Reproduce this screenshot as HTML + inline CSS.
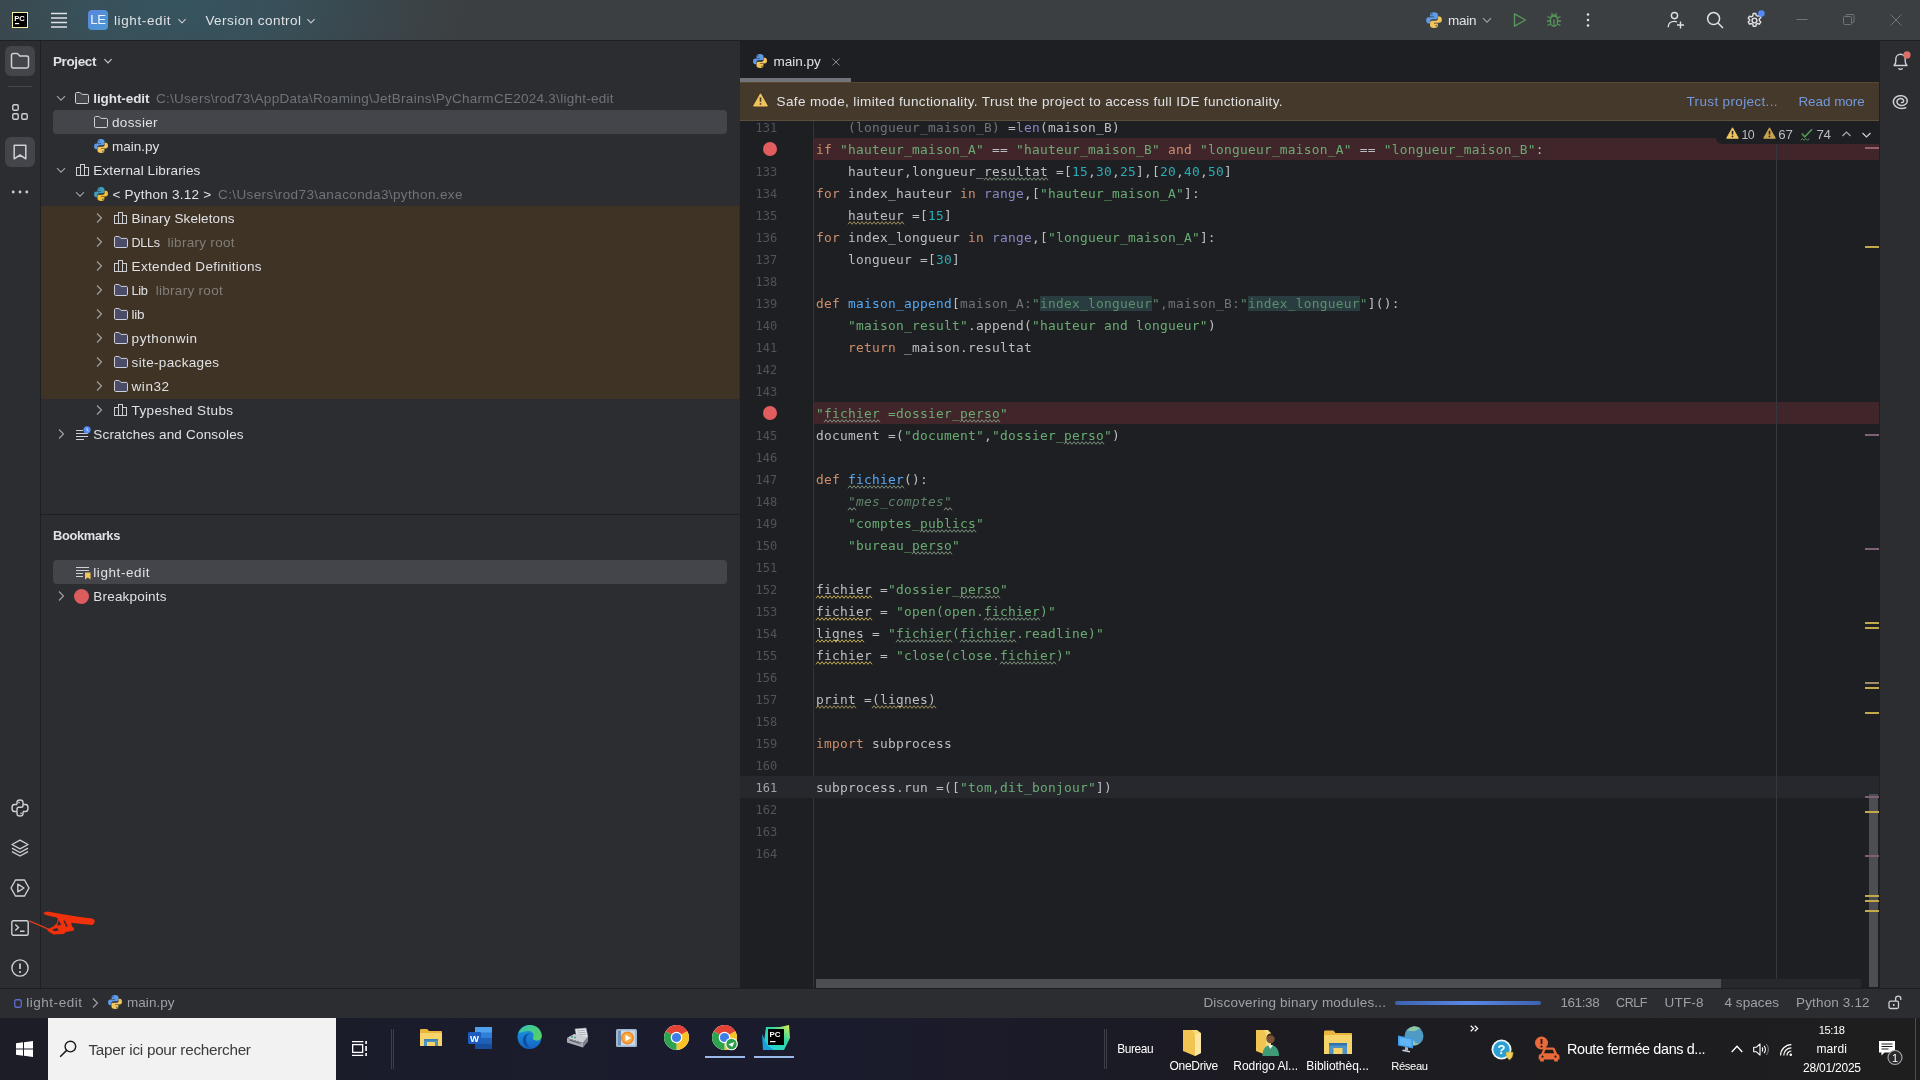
<!DOCTYPE html>
<html lang="fr">
<head>
<meta charset="utf-8">
<title>light-edit – main.py</title>
<style>
*{box-sizing:border-box;margin:0;padding:0}
html,body{width:1920px;height:1080px;overflow:hidden;background:#2b2d30}
body{position:relative;font-family:"Liberation Sans","DejaVu Sans",sans-serif;font-size:13px;color:#dfe1e5;-webkit-font-smoothing:antialiased}
.abs{position:absolute}
#titlebar,#lstripe,#project,#bookmarks,#editor,#rstripe,#status,#taskbar{will-change:transform}
svg{display:block;overflow:visible}
/* ---------- title bar ---------- */
#titlebar{z-index:5;left:0;top:0;width:1920px;height:41px;border-bottom:1px solid #1e1f22;background:radial-gradient(ellipse 290px 150px at 178px 4px,#36545f 0%,#385059 35%,#3a474d 65%,#3c3f41 100%),#3c3f41}
#titlebar .t{position:absolute;top:1px;height:40px;line-height:40px;font-size:13.4px;color:#dfe1e5;white-space:nowrap}
/* ---------- stripes ---------- */
#lstripe{left:0;top:40px;width:41px;height:948px;background:#2b2d30;border-right:1px solid #1e1f22}
#rstripe{left:1879px;top:40px;width:41px;height:948px;background:#2b2d30;border-left:1px solid #1e1f22}
.sbtn{position:absolute;left:5px;width:30px;height:30px;border-radius:6px;background:#43454a}
.ico{position:absolute}
/* ---------- project ---------- */
#project{left:41px;top:40px;width:699px;height:474px;background:#2b2d30;overflow:hidden}
#bookmarks{left:41px;top:515px;width:699px;height:473px;background:#2b2d30;overflow:hidden}
#psplit{left:41px;top:514px;width:699px;height:1px;background:#1e1f22}
.phead{position:absolute;left:12px;font-weight:bold;font-size:13px;color:#dfe1e5;letter-spacing:-.1px;white-space:nowrap}
.row{position:absolute;left:0;width:699px;height:24px;line-height:24px;white-space:nowrap;color:#dfe1e5;font-size:13.2px}
.row .lbl{position:absolute;top:1px}
.row .dim{color:#6f737a}
.sel{position:absolute;left:12px;width:674px;height:24px;border-radius:4px;background:#43454a}
.lib{background:#3f3326}
/* ---------- editor ---------- */
#editor{left:740px;top:40px;width:1139px;height:948px;background:#1e1f22;overflow:hidden}
#code{position:absolute;left:0;top:76px;width:1139px;font-family:"DejaVu Sans Mono","Liberation Mono",monospace;font-size:12.85px;letter-spacing:0.264px;color:#bcbec4}
.ln{position:relative;height:22px;line-height:22px;white-space:pre}
.ln .n{position:absolute;left:0;width:37.3px;text-align:right;color:#4e535c;top:1px;font-size:12px;letter-spacing:0}
.ln .c{position:absolute;left:76px;top:1px}
.bp{background:linear-gradient(90deg,transparent 74px,#40252b 74px)}
.cur{background:#26282e}
.cur .n{color:#a1a3ab}
.k{color:#cf8e6d}.s{color:#6aab73}.m{color:#2aacb8}.f{color:#56a8f5}.b{color:#8888c6}.g{color:#6f737a}.d{color:#5f826b;font-style:italic}
.hl{background:#293c40}
.s2{color:#5c8f6c}
.bpdot{position:absolute;left:22.6px;top:3.7px;width:14.4px;height:14.4px;border-radius:50%;background:#e25d5d}
.zz{position:absolute;top:17.3px}
/* ---------- status ---------- */
#status{left:0;top:988px;width:1920px;height:30px;background:#2b2d30;border-top:1px solid #1e1f22;color:#9da0a8;font-size:13px}
#status .t{position:absolute;top:0;height:29px;line-height:28px;white-space:nowrap}
/* ---------- taskbar ---------- */
#taskbar{left:0;top:1018px;width:1920px;height:62px;background:linear-gradient(90deg,#1c1d26 0,#1b1c2b 420px,#1a1b2d 800px,#1b1b27 1080px,#1c1b22 1250px,#1d1d20 1600px,#1e1e1f 1920px);color:#fff;font-size:12px}
#taskbar .t{position:absolute;white-space:nowrap;color:#fff}
</style>
</head>
<body>
<svg width="0" height="0" style="position:absolute"><defs>
<symbol id="py" viewBox="0 0 16 16"><path d="M7.9 1C5.2 1 4.6 2.1 4.6 3.2V4.9h3.5v.7H3.2C2 5.6 1 6.6 1 8.3s.9 2.9 2.1 2.9h1.3V9.3c0-1.1.9-2 2.1-2h3.3c1 0 1.7-.7 1.7-1.7V3.2C11.5 2.1 10.5 1 7.9 1zM6.1 2.2a.65.65 0 110 1.3.65.65 0 010-1.3z" fill="#5d9be8"/><path d="M8.1 15c2.7 0 3.3-1.1 3.3-2.2V11.1H7.9v-.7h4.9c1.2 0 2.2-1 2.2-2.7s-.9-2.9-2.1-2.9h-1.3v1.9c0 1.1-.9 2-2.1 2H6.2c-1 0-1.7.7-1.7 1.7v2.4C4.5 13.9 5.5 15 8.1 15zm1.8-1.2a.65.65 0 110-1.3.65.65 0 010 1.3z" fill="#f2c55c"/></symbol>
<symbol id="folder" viewBox="0 0 16 16"><path d="M1.5 3.6c0-.6.5-1.1 1.1-1.1h3.2c.3 0 .6.1.8.4l1.1 1.3c.1.1.3.2.5.2h5.2c.6 0 1.1.5 1.1 1.1v6.9c0 .6-.5 1.1-1.1 1.1H2.6c-.6 0-1.1-.5-1.1-1.1z" fill="#43454a" stroke="#ced0d6" stroke-width="1"/></symbol>
<symbol id="libicon" viewBox="0 0 16 16"><g fill="none" stroke="#ced0d6" stroke-width="1"><rect x="1.5" y="5.5" width="4" height="8"/><rect x="5.5" y="2.5" width="4" height="11"/><rect x="9.5" y="5.5" width="4" height="8"/></g></symbol>
<symbol id="chevr" viewBox="0 0 16 16"><path d="M6 3.5L10.5 8 6 12.5" fill="none" stroke="#9da0a8" stroke-width="1.2"/></symbol>
<symbol id="chevd" viewBox="0 0 16 16"><path d="M4 6.2L8 10.2 12 6.2" fill="none" stroke="#9da0a8" stroke-width="1.2"/></symbol>
<symbol id="pysdk" viewBox="0 0 16 16"><path d="M7.9 1C5.2 1 4.6 2.1 4.6 3.2V4.9h3.5v.7H3.2C2 5.6 1 6.6 1 8.3s.9 2.9 2.1 2.9h1.3V9.3c0-1.1.9-2 2.1-2h3.3c1 0 1.7-.7 1.7-1.7V3.2C11.5 2.1 10.5 1 7.9 1zM6.1 2.2a.65.65 0 110 1.3.65.65 0 010-1.3z" fill="#3f9ec0"/><path d="M8.1 15c2.7 0 3.3-1.1 3.3-2.2V11.1H7.9v-.7h4.9c1.2 0 2.2-1 2.2-2.7s-.9-2.9-2.1-2.9h-1.3v1.9c0 1.1-.9 2-2.1 2H6.2c-1 0-1.7.7-1.7 1.7v2.4C4.5 13.9 5.5 15 8.1 15zm1.8-1.2a.65.65 0 110-1.3.65.65 0 010 1.3z" fill="#f2c037"/></symbol>
<symbol id="folderlib" viewBox="0 0 16 16"><path d="M1.5 3.6c0-.6.5-1.1 1.1-1.1h3.2c.3 0 .6.1.8.4l1.1 1.3c.1.1.3.2.5.2h5.2c.6 0 1.1.5 1.1 1.1v6.9c0 .6-.5 1.1-1.1 1.1H2.6c-.6 0-1.1-.5-1.1-1.1z" fill="#4b4c68" stroke="#ced0d6" stroke-width="1"/></symbol>
<symbol id="scratch" viewBox="0 0 16 16"><path d="M1 4.5h7M1 7.5h12M1 10.5h12M1 13.5h8" stroke="#ced0d6" stroke-width="1"/><circle cx="12" cy="3.8" r="3.6" fill="#548af7"/><path d="M12 1.8v2.2l1.4.9" fill="none" stroke="#e6edff" stroke-width=".9"/></symbol>
<symbol id="bmlist" viewBox="0 0 16 16"><path d="M1 3.5h13M1 6.5h13M1 9.5h7M1 12.5h7" stroke="#ced0d6" stroke-width="1"/><path d="M10 8.5h5.5v7L12.75 13.6 10 15.5z" fill="#f2c55c"/></symbol>
<symbol id="chevs" viewBox="0 0 16 16"><path d="M4.4 6.2L8 9.8 11.6 6.2" fill="none" stroke="#c3c6cc" stroke-width="1.2"/></symbol>
</defs></svg>
<div id="titlebar" class="abs">
<div class="ico" style="left:12px;top:12px;width:16px;height:16px;background:#000;border:1px solid #f3eea0"><svg width="14" height="14" viewBox="0 0 14 14"><text x="1.2" y="7.6" font-family="Liberation Sans,sans-serif" font-weight="bold" font-size="7.4" fill="#fff" textLength="10.6" lengthAdjust="spacingAndGlyphs">PC</text><rect x="2" y="10" width="4.2" height="1.2" fill="#fff"/></svg></div>
<svg class="ico" style="left:50px;top:12px" width="18" height="16" viewBox="0 0 18 16"><path d="M1 1.5h16M1 6h16M1 10.5h16M1 15h16" stroke="#dfe1e5" stroke-width="1.3"/></svg>
<div class="ico" style="left:88px;top:10px;width:20px;height:20px;border-radius:4px;background:linear-gradient(135deg,#5b86dc,#4a9ad4);color:#eef6ff;font-size:13px;font-weight:normal;line-height:20px;text-align:center;letter-spacing:-.2px">LE</div>
<span class="t" style="left:114px;font-size:13.5px;letter-spacing:0.608px;">light-edit</span>
<svg class="ico" style="left:173.5px;top:12.5px" width="16" height="16"><use href="#chevs"/></svg>
<span class="t" style="left:205.4px;font-size:13.5px;letter-spacing:0.45px;">Version control</span>
<svg class="ico" style="left:303px;top:12.5px" width="16" height="16"><use href="#chevs"/></svg>
<svg class="ico" style="left:1425px;top:11px" width="18" height="18"><use href="#py"/></svg>
<span class="t" style="left:1448px;font-size:13.5px;letter-spacing:-0.287px;">main</span>
<svg class="ico" style="left:1479px;top:12px" width="16" height="16"><use href="#chevd"/></svg>
<svg class="ico" style="left:1512px;top:12px" width="16" height="16" viewBox="0 0 16 16"><path d="M2.5 1.8v12.4L13.5 8z" fill="none" stroke="#57965c" stroke-width="1.4" stroke-linejoin="round"/></svg>
<svg class="ico" style="left:1546px;top:12px" width="16" height="16" viewBox="0 0 16 16"><g fill="none" stroke="#57965c" stroke-width="1.3"><path d="M4.5 7.5a3.5 3.5 0 017 0v3a3.5 3.5 0 01-7 0z"/><path d="M5.2 5.2a2.8 2.3 0 015.6 0"/><path d="M8 7.5v6M1 9h3.5M11.5 9H15M1.5 13.5l3-1.5M14.5 13.5l-3-1.5M1.5 4.5l3 1.5M14.5 4.5l-3 1.5M5.5 1l1 1.5M10.5 1l-1 1.5"/></g></svg>
<svg class="ico" style="left:1580px;top:12px" width="16" height="16" viewBox="0 0 16 16"><g fill="#dfe1e5"><circle cx="8" cy="2.5" r="1.25"/><circle cx="8" cy="8" r="1.25"/><circle cx="8" cy="13.5" r="1.25"/></g></svg>
<svg class="ico" style="left:1667px;top:11px" width="18" height="18" viewBox="0 0 18 18"><g fill="none" stroke="#dfe1e5" stroke-width="1.4"><circle cx="7.5" cy="4.6" r="3.1"/><path d="M1.2 16.2c0-3.6 2.6-5.8 6.3-5.8 1 0 1.8.1 2.5.4"/><path d="M13.5 10.5v7M10 14h7"/></g></svg>
<svg class="ico" style="left:1706px;top:11px" width="18" height="18" viewBox="0 0 18 18"><g fill="none" stroke="#dfe1e5" stroke-width="1.5"><circle cx="7.6" cy="7.6" r="6"/><path d="M12 12l5 5"/></g></svg>
<svg class="ico" style="left:1746px;top:11px" width="18" height="18" viewBox="0 0 18 18"><g fill="none" stroke="#dfe1e5" stroke-width="1.4"><circle cx="8.5" cy="9.5" r="2.4"/><path d="M7.2 2.5h2.6l.5 2 1.3.7 1.9-.7 1.3 2.2-1.5 1.4v1.5l1.5 1.4-1.3 2.2-1.9-.7-1.3.7-.5 2H7.2l-.5-2-1.3-.7-1.9.7-1.3-2.2 1.5-1.4V8.7L2.2 7.3l1.3-2.2 1.9.7 1.3-.7z" stroke-linejoin="round"/></g><circle cx="15.4" cy="2.6" r="3.3" fill="#548af7"/></svg>
<svg class="ico" style="left:1796px;top:12px" width="12" height="16"><path d="M0.5 7.5h11" stroke="#6f737a" stroke-width="1"/></svg>
<svg class="ico" style="left:1843px;top:14px" width="12" height="12" viewBox="0 0 12 12"><g fill="none" stroke="#6f737a" stroke-width="1"><rect x=".5" y="2.5" width="8" height="8" rx="1"/><path d="M3 2.5V1.5a1 1 0 011-1h6a1 1 0 011 1v6a1 1 0 01-1 1H8.5"/></g></svg>
<svg class="ico" style="left:1890px;top:14px" width="12" height="12" viewBox="0 0 12 12"><path d="M.5.5l11 11M11.5.5L.5 11.5" stroke="#6f737a" stroke-width="1"/></svg>
</div>
<div id="lstripe" class="abs">
<div class="sbtn" style="top:6px"></div>
<svg class="ico" style="left:10px;top:11px" width="20" height="20" viewBox="0 0 20 20"><path d="M1.5 4.2c0-1 .8-1.7 1.7-1.7h3.7c.5 0 1 .2 1.3.6l1.5 1.9h7c1 0 1.8.8 1.8 1.7v8.6c0 1-.8 1.7-1.7 1.7H3.2c-1 0-1.7-.8-1.7-1.7z" fill="none" stroke="#ced0d6" stroke-width="1.5"/></svg>
<div class="ico" style="left:8px;top:46px;width:24px;height:1px;background:#43454a"></div>
<svg class="ico" style="left:12px;top:64px" width="16" height="16" viewBox="0 0 16 16"><g fill="none" stroke="#ced0d6" stroke-width="1.4"><rect x=".8" y=".8" width="5.4" height="5.4" rx="1.2"/><rect x=".8" y="9.8" width="5.4" height="5.4" rx="1.2"/><rect x="9.8" y="9.8" width="5.4" height="5.4" rx="1.2"/></g></svg>
<div class="sbtn" style="top:97px"></div>
<svg class="ico" style="left:13px;top:104px" width="14" height="16" viewBox="0 0 14 16"><path d="M1.2 1.2h11.6v13.6L7 11 1.2 14.8z" fill="none" stroke="#ced0d6" stroke-width="1.5" stroke-linejoin="round"/></svg>
<svg class="ico" style="left:11px;top:149px" width="18" height="6" viewBox="0 0 18 6"><g fill="#ced0d6"><circle cx="2.2" cy="3" r="1.4"/><circle cx="9" cy="3" r="1.4"/><circle cx="15.8" cy="3" r="1.4"/></g></svg>
<svg class="ico" style="left:11px;top:759px" width="18" height="18" viewBox="0 0 18 18"><g fill="none" stroke="#ced0d6" stroke-width="1.4" stroke-linejoin="round"><path d="M6 5.5V3.2C6 1.9 7 1 9 1s3 .9 3 2.2v3.3c0 1-.8 1.8-1.8 1.8H7.8C6.8 8.3 6 9.1 6 10.1v1.6"/><path d="M6 5.5H3.2C1.9 5.5 1 6.5 1 9s.9 3.5 2.2 3.5H6"/><path d="M12 12.5v2.3c0 1.3-1 2.2-3 2.2s-3-.9-3-2.2v-3.1"/><path d="M12 12.5h2.8c1.3 0 2.2-1 2.2-3.5s-.9-3.5-2.2-3.5H12"/></g><circle cx="8" cy="3.6" r=".8" fill="#ced0d6"/><circle cx="10" cy="14.4" r=".8" fill="#ced0d6"/></svg>
<svg class="ico" style="left:11px;top:799px" width="18" height="18" viewBox="0 0 18 18"><g fill="none" stroke="#ced0d6" stroke-width="1.4" stroke-linejoin="round"><path d="M9 1.2l8 4.3-8 4.3-8-4.3z"/><path d="M1 9.2l8 4.3 8-4.3"/><path d="M1 12.7l8 4.3 8-4.3"/></g></svg>
<svg class="ico" style="left:10px;top:839px" width="20" height="18" viewBox="0 0 20 18"><g fill="none" stroke="#ced0d6" stroke-width="1.4" stroke-linejoin="round"><path d="M5.5 1h9L19 9l-4.5 8h-9L1 9z"/><path d="M7.8 5.2v7.6L14 9z"/></g></svg>
<svg class="ico" style="left:11px;top:880px" width="18" height="16" viewBox="0 0 18 16"><g fill="none" stroke="#ced0d6" stroke-width="1.4"><rect x=".8" y=".8" width="16.4" height="14.4" rx="1.5"/><path d="M4.3 4.5l3.2 3-3.2 3M9 11.2h4.5"/></g></svg>
<svg class="ico" style="left:11px;top:919px" width="18" height="18" viewBox="0 0 18 18"><circle cx="9" cy="9" r="8.1" fill="none" stroke="#ced0d6" stroke-width="1.4"/><path d="M9 4.5v5.5" stroke="#ced0d6" stroke-width="1.7"/><circle cx="9" cy="13" r="1.1" fill="#ced0d6"/></svg>
</div>
<div id="project" class="abs"><div class="phead" style="top:13px;line-height:18px"><span class="" style="left:0px;font-size:13.5px;letter-spacing:-0.395px;font-weight:bold;position:static;">Project</span></div><svg class="ico" style="left:58.5px;top:13px" width="16" height="16"><use href="#chevs"/></svg><div class="lib abs" style="left:0;top:166px;width:698px;height:193px"></div><div class="sel" style="top:70px"></div><div class="row " style="top:46px"><svg class="ico" style="left:12px;top:4px" width="16" height="16"><use href="#chevd"/></svg><svg class="ico" style="left:33px;top:4px" width="16" height="16"><use href="#folder"/></svg><span class="lbl" style="left:52.3px;font-size:13.5px;letter-spacing:-0.088px;font-weight:bold;">light-edit</span><span class="lbl dim" style="left:115px;font-size:13.5px;letter-spacing:0.271px;">C:\Users\rod73\AppData\Roaming\JetBrains\PyCharmCE2024.3\light-edit</span></div><div class="row " style="top:70px"><svg class="ico" style="left:52px;top:4px" width="16" height="16"><use href="#folder"/></svg><span class="lbl" style="left:71px;font-size:13.5px;letter-spacing:0.347px;">dossier</span></div><div class="row " style="top:94px"><svg class="ico" style="left:52px;top:4px" width="16" height="16"><use href="#py"/></svg><span class="lbl" style="left:71px;font-size:13.5px;letter-spacing:-0.012px;">main.py</span></div><div class="row " style="top:118px"><svg class="ico" style="left:12px;top:4px" width="16" height="16"><use href="#chevd"/></svg><svg class="ico" style="left:34px;top:4px" width="16" height="16"><use href="#libicon"/></svg><span class="lbl" style="left:52.3px;font-size:13.5px;letter-spacing:0.115px;">External Libraries</span></div><div class="row " style="top:142px"><svg class="ico" style="left:31px;top:4px" width="16" height="16"><use href="#chevd"/></svg><svg class="ico" style="left:52px;top:4px" width="16" height="16"><use href="#pysdk"/></svg><span class="lbl" style="left:71.5px;font-size:13.5px;letter-spacing:0.241px;">&lt; Python 3.12 &gt;</span><span class="lbl dim" style="left:177px;font-size:13.5px;letter-spacing:0.393px;">C:\Users\rod73\anaconda3\python.exe</span></div><div class="row " style="top:166px"><svg class="ico" style="left:50px;top:4px" width="16" height="16"><use href="#chevr"/></svg><svg class="ico" style="left:72px;top:4px" width="16" height="16"><use href="#libicon"/></svg><span class="lbl" style="left:90.6px;font-size:13.5px;letter-spacing:0.113px;">Binary Skeletons</span></div><div class="row " style="top:190px"><svg class="ico" style="left:50px;top:4px" width="16" height="16"><use href="#chevr"/></svg><svg class="ico" style="left:72px;top:4px" width="16" height="16"><use href="#folderlib"/></svg><span class="lbl" style="left:90.6px;font-size:12.6px;letter-spacing:-0.338px;">DLLs</span><span class="lbl dim" style="color:#827e78;left:126.5px;font-size:13.5px;letter-spacing:0.293px;">library root</span></div><div class="row " style="top:214px"><svg class="ico" style="left:50px;top:4px" width="16" height="16"><use href="#chevr"/></svg><svg class="ico" style="left:72px;top:4px" width="16" height="16"><use href="#libicon"/></svg><span class="lbl" style="left:90.6px;font-size:13.5px;letter-spacing:0.325px;">Extended Definitions</span></div><div class="row " style="top:238px"><svg class="ico" style="left:50px;top:4px" width="16" height="16"><use href="#chevr"/></svg><svg class="ico" style="left:72px;top:4px" width="16" height="16"><use href="#folderlib"/></svg><span class="lbl" style="left:90.6px;font-size:12.8px;letter-spacing:-0.341px;">Lib</span><span class="lbl dim" style="color:#827e78;left:114.7px;font-size:13.5px;letter-spacing:0.293px;">library root</span></div><div class="row " style="top:262px"><svg class="ico" style="left:50px;top:4px" width="16" height="16"><use href="#chevr"/></svg><svg class="ico" style="left:72px;top:4px" width="16" height="16"><use href="#folderlib"/></svg><span class="lbl" style="left:90.6px;font-size:13.5px;letter-spacing:-0.254px;">lib</span></div><div class="row " style="top:286px"><svg class="ico" style="left:50px;top:4px" width="16" height="16"><use href="#chevr"/></svg><svg class="ico" style="left:72px;top:4px" width="16" height="16"><use href="#folderlib"/></svg><span class="lbl" style="left:90.6px;font-size:13.5px;letter-spacing:0.589px;">pythonwin</span></div><div class="row " style="top:310px"><svg class="ico" style="left:50px;top:4px" width="16" height="16"><use href="#chevr"/></svg><svg class="ico" style="left:72px;top:4px" width="16" height="16"><use href="#folderlib"/></svg><span class="lbl" style="left:90.6px;font-size:13.5px;letter-spacing:0.35px;">site-packages</span></div><div class="row " style="top:334px"><svg class="ico" style="left:50px;top:4px" width="16" height="16"><use href="#chevr"/></svg><svg class="ico" style="left:72px;top:4px" width="16" height="16"><use href="#folderlib"/></svg><span class="lbl" style="left:90.6px;font-size:13.5px;letter-spacing:0.531px;">win32</span></div><div class="row " style="top:358px"><svg class="ico" style="left:50px;top:4px" width="16" height="16"><use href="#chevr"/></svg><svg class="ico" style="left:72px;top:4px" width="16" height="16"><use href="#libicon"/></svg><span class="lbl" style="left:90.6px;font-size:13.5px;letter-spacing:0.353px;">Typeshed Stubs</span></div><div class="row " style="top:382px"><svg class="ico" style="left:12px;top:4px" width="16" height="16"><use href="#chevr"/></svg><svg class="ico" style="left:34px;top:4px" width="16" height="16"><use href="#scratch"/></svg><span class="lbl" style="left:52.3px;font-size:13.5px;letter-spacing:0.189px;">Scratches and Consoles</span></div></div>
<div id="psplit" class="abs"></div>
<div id="bookmarks" class="abs"><div class="phead" style="top:12px;line-height:18px"><span class="" style="left:0px;font-size:12.9px;letter-spacing:-0.358px;font-weight:bold;position:static;">Bookmarks</span></div><div class="sel" style="top:45px"></div><div class="row" style="top:45px"><svg class="ico" style="left:34px;top:4px" width="16" height="16"><use href="#bmlist"/></svg><span class="lbl" style="left:52.3px;font-size:13.5px;letter-spacing:0.575px;">light-edit</span></div><div class="row" style="top:69px"><svg class="ico" style="left:12px;top:4px" width="16" height="16"><use href="#chevr"/></svg><div class="ico" style="left:33px;top:4.5px;width:15px;height:15px;border-radius:50%;background:#db5c5c"></div><span class="lbl" style="left:52.3px;font-size:13.5px;letter-spacing:0.191px;">Breakpoints</span></div></div>
<div id="editor" class="abs"><div class="abs" style="left:73px;top:80px;width:1px;height:868px;background:#313438"></div><div id="code"><div class="ln "><span class="n">131</span><span class="c">    <span class="g">(longueur_maison_B)</span> =<span class="b">len</span>(maison_B)</span></div><div class="ln bp"><span class="bpdot"></span><span class="c"><span class="k">if</span> <span class="s">&quot;hauteur_maison_A&quot;</span> == <span class="s">&quot;hauteur_maison_B&quot;</span> <span class="k">and</span> <span class="s">&quot;longueur_maison_A&quot;</span> == <span class="s">&quot;longueur_maison_B&quot;</span>:</span></div><div class="ln "><span class="n">133</span><span class="c">    hauteur,longueur_<span class="wk">resultat</span> =[<span class="m">15</span>,<span class="m">30</span>,<span class="m">25</span>],[<span class="m">20</span>,<span class="m">40</span>,<span class="m">50</span>]</span><svg class="zz" style="left:244px" width="64" height="4" viewBox="0 0 64 4"><polyline points="0 3.3 2 0.7 4 3.3 6 0.7 8 3.3 10 0.7 12 3.3 14 0.7 16 3.3 18 0.7 20 3.3 22 0.7 24 3.3 26 0.7 28 3.3 30 0.7 32 3.3 34 0.7 36 3.3 38 0.7 40 3.3 42 0.7 44 3.3 46 0.7 48 3.3 50 0.7 52 3.3 54 0.7 56 3.3 58 0.7 60 3.3 62 0.7 64 3.3" fill="none" stroke="#7d8f7b" stroke-width="1"/></svg></div><div class="ln "><span class="n">134</span><span class="c"><span class="k">for</span> index_hauteur <span class="k">in</span> <span class="b">range</span>,[<span class="s">&quot;hauteur_maison_A&quot;</span>]:</span></div><div class="ln "><span class="n">135</span><span class="c">    <span class="w">hauteur</span> =[<span class="m">15</span>]</span><svg class="zz" style="left:108px" width="56" height="4" viewBox="0 0 56 4"><polyline points="0 3.3 2 0.7 4 3.3 6 0.7 8 3.3 10 0.7 12 3.3 14 0.7 16 3.3 18 0.7 20 3.3 22 0.7 24 3.3 26 0.7 28 3.3 30 0.7 32 3.3 34 0.7 36 3.3 38 0.7 40 3.3 42 0.7 44 3.3 46 0.7 48 3.3 50 0.7 52 3.3 54 0.7 56 3.3" fill="none" stroke="#9c8f5c" stroke-width="1"/></svg></div><div class="ln "><span class="n">136</span><span class="c"><span class="k">for</span> index_longueur <span class="k">in</span> <span class="b">range</span>,[<span class="s">&quot;longueur_maison_A&quot;</span>]:</span></div><div class="ln "><span class="n">137</span><span class="c">    longueur =[<span class="m">30</span>]</span></div><div class="ln "><span class="n">138</span><span class="c"></span></div><div class="ln "><span class="n">139</span><span class="c"><span class="k">def</span> <span class="f">maison_append</span>[<span class="g">maison_A:</span><span class="s2">&quot;</span><span class="s2 hl">index_longueur</span><span class="s2">&quot;</span><span class="g">,maison_B:</span><span class="s2">&quot;</span><span class="s2 hl">index_longueur</span><span class="s2">&quot;</span>]():</span></div><div class="ln "><span class="n">140</span><span class="c">    <span class="s">&quot;maison_result&quot;</span>.append(<span class="s">&quot;hauteur and longueur&quot;</span>)</span></div><div class="ln "><span class="n">141</span><span class="c">    <span class="k">return</span> _maison.resultat</span></div><div class="ln "><span class="n">142</span><span class="c"></span></div><div class="ln "><span class="n">143</span><span class="c"></span></div><div class="ln bp"><span class="bpdot"></span><span class="c"><span class="s">&quot;</span><span class="s wk">fichier</span><span class="s"> =dossier_</span><span class="s wk">perso</span><span class="s">&quot;</span></span><svg class="zz" style="left:84px" width="56" height="4" viewBox="0 0 56 4"><polyline points="0 3.3 2 0.7 4 3.3 6 0.7 8 3.3 10 0.7 12 3.3 14 0.7 16 3.3 18 0.7 20 3.3 22 0.7 24 3.3 26 0.7 28 3.3 30 0.7 32 3.3 34 0.7 36 3.3 38 0.7 40 3.3 42 0.7 44 3.3 46 0.7 48 3.3 50 0.7 52 3.3 54 0.7 56 3.3" fill="none" stroke="#7d8f7b" stroke-width="1"/></svg><svg class="zz" style="left:220px" width="40" height="4" viewBox="0 0 40 4"><polyline points="0 3.3 2 0.7 4 3.3 6 0.7 8 3.3 10 0.7 12 3.3 14 0.7 16 3.3 18 0.7 20 3.3 22 0.7 24 3.3 26 0.7 28 3.3 30 0.7 32 3.3 34 0.7 36 3.3 38 0.7 40 3.3" fill="none" stroke="#7d8f7b" stroke-width="1"/></svg></div><div class="ln "><span class="n">145</span><span class="c">document =(<span class="s">&quot;document&quot;</span>,<span class="s">&quot;dossier_</span><span class="s wk">perso</span><span class="s">&quot;</span>)</span><svg class="zz" style="left:324px" width="40" height="4" viewBox="0 0 40 4"><polyline points="0 3.3 2 0.7 4 3.3 6 0.7 8 3.3 10 0.7 12 3.3 14 0.7 16 3.3 18 0.7 20 3.3 22 0.7 24 3.3 26 0.7 28 3.3 30 0.7 32 3.3 34 0.7 36 3.3 38 0.7 40 3.3" fill="none" stroke="#7d8f7b" stroke-width="1"/></svg></div><div class="ln "><span class="n">146</span><span class="c"></span></div><div class="ln "><span class="n">147</span><span class="c"><span class="k">def</span> <span class="f wk">fichier</span>():</span><svg class="zz" style="left:108px" width="56" height="4" viewBox="0 0 56 4"><polyline points="0 3.3 2 0.7 4 3.3 6 0.7 8 3.3 10 0.7 12 3.3 14 0.7 16 3.3 18 0.7 20 3.3 22 0.7 24 3.3 26 0.7 28 3.3 30 0.7 32 3.3 34 0.7 36 3.3 38 0.7 40 3.3 42 0.7 44 3.3 46 0.7 48 3.3 50 0.7 52 3.3 54 0.7 56 3.3" fill="none" stroke="#7d8f7b" stroke-width="1"/></svg></div><div class="ln "><span class="n">148</span><span class="c">    <span class="d wk">&quot;</span><span class="d">mes_comptes</span><span class="d wk">&quot;</span></span><svg class="zz" style="left:108px" width="8" height="4" viewBox="0 0 8 4"><polyline points="0 3.3 2 0.7 4 3.3 6 0.7 8 3.3" fill="none" stroke="#7d8f7b" stroke-width="1"/></svg><svg class="zz" style="left:204px" width="8" height="4" viewBox="0 0 8 4"><polyline points="0 3.3 2 0.7 4 3.3 6 0.7 8 3.3" fill="none" stroke="#7d8f7b" stroke-width="1"/></svg></div><div class="ln "><span class="n">149</span><span class="c">    <span class="s">&quot;comptes_</span><span class="s wk">publics</span><span class="s">&quot;</span></span><svg class="zz" style="left:180px" width="56" height="4" viewBox="0 0 56 4"><polyline points="0 3.3 2 0.7 4 3.3 6 0.7 8 3.3 10 0.7 12 3.3 14 0.7 16 3.3 18 0.7 20 3.3 22 0.7 24 3.3 26 0.7 28 3.3 30 0.7 32 3.3 34 0.7 36 3.3 38 0.7 40 3.3 42 0.7 44 3.3 46 0.7 48 3.3 50 0.7 52 3.3 54 0.7 56 3.3" fill="none" stroke="#7d8f7b" stroke-width="1"/></svg></div><div class="ln "><span class="n">150</span><span class="c">    <span class="s">&quot;bureau_</span><span class="s wk">perso</span><span class="s">&quot;</span></span><svg class="zz" style="left:172px" width="40" height="4" viewBox="0 0 40 4"><polyline points="0 3.3 2 0.7 4 3.3 6 0.7 8 3.3 10 0.7 12 3.3 14 0.7 16 3.3 18 0.7 20 3.3 22 0.7 24 3.3 26 0.7 28 3.3 30 0.7 32 3.3 34 0.7 36 3.3 38 0.7 40 3.3" fill="none" stroke="#7d8f7b" stroke-width="1"/></svg></div><div class="ln "><span class="n">151</span><span class="c"></span></div><div class="ln "><span class="n">152</span><span class="c"><span class="wy">fichier</span> =<span class="s">&quot;dossier_</span><span class="s wk">perso</span><span class="s">&quot;</span></span><svg class="zz" style="left:76px" width="56" height="4" viewBox="0 0 56 4"><polyline points="0 3.3 2 0.7 4 3.3 6 0.7 8 3.3 10 0.7 12 3.3 14 0.7 16 3.3 18 0.7 20 3.3 22 0.7 24 3.3 26 0.7 28 3.3 30 0.7 32 3.3 34 0.7 36 3.3 38 0.7 40 3.3 42 0.7 44 3.3 46 0.7 48 3.3 50 0.7 52 3.3 54 0.7 56 3.3" fill="none" stroke="#c2ab4f" stroke-width="1"/></svg><svg class="zz" style="left:220px" width="40" height="4" viewBox="0 0 40 4"><polyline points="0 3.3 2 0.7 4 3.3 6 0.7 8 3.3 10 0.7 12 3.3 14 0.7 16 3.3 18 0.7 20 3.3 22 0.7 24 3.3 26 0.7 28 3.3 30 0.7 32 3.3 34 0.7 36 3.3 38 0.7 40 3.3" fill="none" stroke="#7d8f7b" stroke-width="1"/></svg></div><div class="ln "><span class="n">153</span><span class="c"><span class="wy">fichier</span> = <span class="s">&quot;open(open.</span><span class="s wk">fichier</span><span class="s">)&quot;</span></span><svg class="zz" style="left:76px" width="56" height="4" viewBox="0 0 56 4"><polyline points="0 3.3 2 0.7 4 3.3 6 0.7 8 3.3 10 0.7 12 3.3 14 0.7 16 3.3 18 0.7 20 3.3 22 0.7 24 3.3 26 0.7 28 3.3 30 0.7 32 3.3 34 0.7 36 3.3 38 0.7 40 3.3 42 0.7 44 3.3 46 0.7 48 3.3 50 0.7 52 3.3 54 0.7 56 3.3" fill="none" stroke="#c2ab4f" stroke-width="1"/></svg><svg class="zz" style="left:244px" width="56" height="4" viewBox="0 0 56 4"><polyline points="0 3.3 2 0.7 4 3.3 6 0.7 8 3.3 10 0.7 12 3.3 14 0.7 16 3.3 18 0.7 20 3.3 22 0.7 24 3.3 26 0.7 28 3.3 30 0.7 32 3.3 34 0.7 36 3.3 38 0.7 40 3.3 42 0.7 44 3.3 46 0.7 48 3.3 50 0.7 52 3.3 54 0.7 56 3.3" fill="none" stroke="#7d8f7b" stroke-width="1"/></svg></div><div class="ln "><span class="n">154</span><span class="c"><span class="wy">lignes</span> = <span class="s">&quot;</span><span class="s wk">fichier</span><span class="s">(</span><span class="s wk">fichier</span><span class="s">.readline)&quot;</span></span><svg class="zz" style="left:76px" width="48" height="4" viewBox="0 0 48 4"><polyline points="0 3.3 2 0.7 4 3.3 6 0.7 8 3.3 10 0.7 12 3.3 14 0.7 16 3.3 18 0.7 20 3.3 22 0.7 24 3.3 26 0.7 28 3.3 30 0.7 32 3.3 34 0.7 36 3.3 38 0.7 40 3.3 42 0.7 44 3.3 46 0.7 48 3.3" fill="none" stroke="#c2ab4f" stroke-width="1"/></svg><svg class="zz" style="left:156px" width="56" height="4" viewBox="0 0 56 4"><polyline points="0 3.3 2 0.7 4 3.3 6 0.7 8 3.3 10 0.7 12 3.3 14 0.7 16 3.3 18 0.7 20 3.3 22 0.7 24 3.3 26 0.7 28 3.3 30 0.7 32 3.3 34 0.7 36 3.3 38 0.7 40 3.3 42 0.7 44 3.3 46 0.7 48 3.3 50 0.7 52 3.3 54 0.7 56 3.3" fill="none" stroke="#7d8f7b" stroke-width="1"/></svg><svg class="zz" style="left:220px" width="56" height="4" viewBox="0 0 56 4"><polyline points="0 3.3 2 0.7 4 3.3 6 0.7 8 3.3 10 0.7 12 3.3 14 0.7 16 3.3 18 0.7 20 3.3 22 0.7 24 3.3 26 0.7 28 3.3 30 0.7 32 3.3 34 0.7 36 3.3 38 0.7 40 3.3 42 0.7 44 3.3 46 0.7 48 3.3 50 0.7 52 3.3 54 0.7 56 3.3" fill="none" stroke="#7d8f7b" stroke-width="1"/></svg></div><div class="ln "><span class="n">155</span><span class="c"><span class="wy">fichier</span> = <span class="s">&quot;close(close.</span><span class="s wk">fichier</span><span class="s">)&quot;</span></span><svg class="zz" style="left:76px" width="56" height="4" viewBox="0 0 56 4"><polyline points="0 3.3 2 0.7 4 3.3 6 0.7 8 3.3 10 0.7 12 3.3 14 0.7 16 3.3 18 0.7 20 3.3 22 0.7 24 3.3 26 0.7 28 3.3 30 0.7 32 3.3 34 0.7 36 3.3 38 0.7 40 3.3 42 0.7 44 3.3 46 0.7 48 3.3 50 0.7 52 3.3 54 0.7 56 3.3" fill="none" stroke="#c2ab4f" stroke-width="1"/></svg><svg class="zz" style="left:260px" width="56" height="4" viewBox="0 0 56 4"><polyline points="0 3.3 2 0.7 4 3.3 6 0.7 8 3.3 10 0.7 12 3.3 14 0.7 16 3.3 18 0.7 20 3.3 22 0.7 24 3.3 26 0.7 28 3.3 30 0.7 32 3.3 34 0.7 36 3.3 38 0.7 40 3.3 42 0.7 44 3.3 46 0.7 48 3.3 50 0.7 52 3.3 54 0.7 56 3.3" fill="none" stroke="#7d8f7b" stroke-width="1"/></svg></div><div class="ln "><span class="n">156</span><span class="c"></span></div><div class="ln "><span class="n">157</span><span class="c"><span class="w">print</span> =<span class="w">(lignes)</span></span><svg class="zz" style="left:76px" width="40" height="4" viewBox="0 0 40 4"><polyline points="0 3.3 2 0.7 4 3.3 6 0.7 8 3.3 10 0.7 12 3.3 14 0.7 16 3.3 18 0.7 20 3.3 22 0.7 24 3.3 26 0.7 28 3.3 30 0.7 32 3.3 34 0.7 36 3.3 38 0.7 40 3.3" fill="none" stroke="#9c8f5c" stroke-width="1"/></svg><svg class="zz" style="left:132px" width="64" height="4" viewBox="0 0 64 4"><polyline points="0 3.3 2 0.7 4 3.3 6 0.7 8 3.3 10 0.7 12 3.3 14 0.7 16 3.3 18 0.7 20 3.3 22 0.7 24 3.3 26 0.7 28 3.3 30 0.7 32 3.3 34 0.7 36 3.3 38 0.7 40 3.3 42 0.7 44 3.3 46 0.7 48 3.3 50 0.7 52 3.3 54 0.7 56 3.3 58 0.7 60 3.3 62 0.7 64 3.3" fill="none" stroke="#9c8f5c" stroke-width="1"/></svg></div><div class="ln "><span class="n">158</span><span class="c"></span></div><div class="ln "><span class="n">159</span><span class="c"><span class="k">import</span> subprocess</span></div><div class="ln "><span class="n">160</span><span class="c"></span></div><div class="ln cur"><span class="n">161</span><span class="c">subprocess.run =([<span class="s">&quot;tom,dit_bonjour&quot;</span>])</span></div><div class="ln "><span class="n">162</span><span class="c"></span></div><div class="ln "><span class="n">163</span><span class="c"></span></div><div class="ln "><span class="n">164</span><span class="c"></span></div></div><div class="abs" style="left:1036px;top:80px;width:1px;height:868px;background:#36383d"></div><div class="abs" style="left:0;top:0;width:1139px;height:43px;background:#1e1f22"></div><svg class="ico" style="left:12px;top:13px" width="16" height="16"><use href="#py"/></svg><span class="abs" style="left:33.4px;font-size:13.5px;letter-spacing:0.021px;top:13px;line-height:18px;color:#dfe1e5;white-space:nowrap;">main.py</span><svg class="ico" style="left:92px;top:17.5px" width="8" height="8" viewBox="0 0 8 8"><path d="M.5.5l7 7M7.5.5l-7 7" stroke="#868a91" stroke-width="1"/></svg><div class="abs" style="left:0;top:38px;width:111px;height:4px;background:#71747b"></div><div class="abs" style="left:0;top:42px;width:1139px;height:39px;background:#45392b;border-top:1px solid #57482f;border-bottom:1px solid #5c4e3c"></div><svg class="ico" style="left:12.5px;top:53px" width="15" height="14" viewBox="0 0 15 14"><path d="M7.5.8L14.4 13H.6z" fill="#f2c55c" stroke="#f2c55c" stroke-width="1" stroke-linejoin="round"/><path d="M7.5 4.4v4.4" stroke="#45392b" stroke-width="1.6"/><circle cx="7.5" cy="10.9" r=".95" fill="#45392b"/></svg><span class="abs" style="left:36.6px;font-size:13.5px;letter-spacing:0.357px;top:53px;line-height:18px;color:#dfe1e5;white-space:nowrap;">Safe mode, limited functionality. Trust the project to access full IDE functionality.</span><span class="abs" style="left:946.5px;font-size:13.5px;letter-spacing:0.348px;top:53px;line-height:18px;color:#7399dc;white-space:nowrap;">Trust project...</span><span class="abs" style="left:1058.4px;font-size:13.5px;letter-spacing:-0.048px;top:53px;line-height:18px;color:#7399dc;white-space:nowrap;">Read more</span><div class="abs" style="left:976px;top:81px;width:163px;height:23px;background:#1e1f22;border-radius:0 0 0 6px"></div><svg class="ico" style="left:986px;top:87.3px" width="13" height="12" viewBox="0 0 13 12"><path d="M6.5.8L12.3 11.2H.7z" fill="#f2c55c" stroke="#f2c55c" stroke-width="1" stroke-linejoin="round"/><path d="M6.5 3.8v3.7" stroke="#1e1f22" stroke-width="1.5"/><circle cx="6.5" cy="9.4" r=".85" fill="#1e1f22"/></svg><span class="abs" style="left:1001.4px;font-size:12.4px;letter-spacing:-0.493px;top:85.5px;line-height:18px;color:#bcbec4;">10</span><svg class="ico" style="left:1022.5px;top:87.3px" width="13" height="12" viewBox="0 0 13 12"><path d="M6.5.8L12.3 11.2H.7z" fill="#c7a450" stroke="#c7a450" stroke-width="1" stroke-linejoin="round"/><path d="M6.5 3.8v3.7" stroke="#1e1f22" stroke-width="1.5"/><circle cx="6.5" cy="9.4" r=".85" fill="#1e1f22"/></svg><span class="abs" style="left:1038.3px;font-size:13.3px;letter-spacing:-0.294px;top:85.5px;line-height:18px;color:#bcbec4;">67</span><svg class="ico" style="left:1060px;top:88px" width="13" height="14" viewBox="0 0 13 14"><path d="M1.8 5.4l3 3.4L12 1.2" fill="none" stroke="#57965c" stroke-width="1.5"/><path d="M.8 12.3l1.7-1.8 1.7 1.8 1.7-1.8 1.7 1.8 1.7-1.8" fill="none" stroke="#57965c" stroke-width="1"/></svg><span class="abs" style="left:1076.4px;font-size:13.4px;letter-spacing:-0.305px;top:85.5px;line-height:18px;color:#bcbec4;">74</span><svg class="ico" style="left:1102px;top:91px" width="9" height="6" viewBox="0 0 9 6"><path d="M.5 5l4-4 4 4" fill="none" stroke="#a8abb2" stroke-width="1.2"/></svg><svg class="ico" style="left:1122px;top:92px" width="9" height="6" viewBox="0 0 9 6"><path d="M.5 1l4 4 4-4" fill="none" stroke="#ced0d6" stroke-width="1.2"/></svg><div class="abs" style="left:1129px;top:754px;width:9px;height:193px;background:#4d4e52"></div><div class="abs" style="left:1125px;top:107px;width:14px;height:2px;background:#9a5f6c"></div><div class="abs" style="left:1125px;top:206px;width:14px;height:2px;background:#c4a94a"></div><div class="abs" style="left:1125px;top:394px;width:14px;height:2px;background:#7d6078"></div><div class="abs" style="left:1125px;top:508px;width:14px;height:2px;background:#7d6078"></div><div class="abs" style="left:1125px;top:582px;width:14px;height:2px;background:#c4a94a"></div><div class="abs" style="left:1125px;top:587px;width:14px;height:2px;background:#c4a94a"></div><div class="abs" style="left:1125px;top:642px;width:14px;height:2px;background:#a08a6a"></div><div class="abs" style="left:1125px;top:647px;width:14px;height:2px;background:#c4a94a"></div><div class="abs" style="left:1125px;top:672px;width:14px;height:2px;background:#c4a94a"></div><div class="abs" style="left:1125px;top:756px;width:14px;height:2px;background:#7d6078"></div><div class="abs" style="left:1125px;top:771px;width:14px;height:2px;background:#c4a94a"></div><div class="abs" style="left:1125px;top:815px;width:14px;height:2px;background:#7d6078"></div><div class="abs" style="left:1125px;top:855px;width:14px;height:2px;background:#c4a94a"></div><div class="abs" style="left:1125px;top:860px;width:14px;height:2px;background:#c4a94a"></div><div class="abs" style="left:1125px;top:870px;width:14px;height:2px;background:#c4a94a"></div><div class="abs" style="left:76px;top:939px;width:1045px;height:9px;background:#27282c"></div><div class="abs" style="left:76px;top:939px;width:905px;height:9px;background:#4d4e52"></div></div>
<div id="rstripe" class="abs"><svg class="ico" style="left:10.5px;top:10.5px" width="20" height="20" viewBox="0 0 20 20"><g fill="none" stroke="#ced0d6" stroke-width="1.4" stroke-linejoin="round"><path d="M3 14.5c1.3-1 1.8-2.3 1.8-4.2V8.1c0-2.8 2-4.8 4.7-4.8s4.7 2 4.7 4.8v2.2c0 1.9.5 3.2 1.8 4.2z"/><path d="M7.5 17.2c.4.8 1.1 1.2 2 1.2s1.6-.4 2-1.2"/></g><circle cx="16" cy="3.9" r="3.6" fill="#dd6f69"/></svg><svg class="ico" style="left:12px;top:52.5px" width="18" height="18" viewBox="0 0 18 18"><path d="M9.53 9.56 L9.77 9.58 L10.03 9.55 L10.29 9.50 L10.54 9.41 L10.79 9.28 L11.02 9.12 L11.22 8.92 L11.38 8.69 L11.51 8.44 L11.59 8.16 L11.63 7.87 L11.60 7.57 L11.52 7.26 L11.39 6.96 L11.19 6.67 L10.93 6.40 L10.62 6.16 L10.27 5.95 L9.86 5.79 L9.42 5.67 L8.96 5.60 L8.47 5.59 L7.98 5.64 L7.49 5.75 L7.01 5.92 L6.56 6.16 L6.15 6.45 L5.79 6.79 L5.48 7.18 L5.24 7.61 L5.08 8.08 L5.00 8.56 L5.01 9.07 L5.11 9.57 L5.30 10.07 L5.58 10.55 L5.95 10.99 L6.41 11.40 L6.94 11.75 L7.53 12.05 L8.19 12.27 L8.88 12.41 L9.61 12.47 L10.35 12.45 L11.09 12.34 L11.82 12.13 L12.51 11.84 L13.15 11.47 L13.73 11.01 L14.23 10.49 L14.63 9.90 L14.94 9.26 L15.13 8.59 L15.20 7.89 L15.15 7.18 L14.97 6.47 L14.66 5.78 L14.23 5.13 L13.68 4.53 L13.03 3.99 L12.28 3.52 L11.44 3.15 L10.54 2.87 L9.58 2.71 L8.60 2.65 L7.60 2.72 L6.61 2.90 L5.66 3.20 L4.75 3.61 L3.92 4.13 L3.18 4.75 L2.55 5.46 L2.05 6.24 L1.68 7.08 L1.46 7.97 L1.40 8.88 L1.50 9.80 L1.77 10.71 L2.19 11.59 L2.77 12.41 L3.50 13.17 L4.35 13.84 L5.33 14.41 L6.41 14.86 L7.56 15.19 L8.78 15.37 L10.02 15.42 L11.27 15.32 L12.51 15.06 L13.69 14.67" fill="none" stroke="#ced0d6" stroke-width="1.5" stroke-linecap="round" stroke-linejoin="round"/></svg></div>
<div id="status" class="abs"><svg class="ico" style="left:14px;top:9.5px" width="8" height="9" viewBox="0 0 8 9"><rect x=".75" y=".75" width="6.5" height="7.5" rx="1.5" fill="none" stroke="#5f6bd0" stroke-width="1.3"/></svg><span class="t" style="left:26.2px;font-size:13.5px;letter-spacing:0.53px;">light-edit</span><svg class="ico" style="left:87px;top:5.5px" width="16" height="16"><use href="#chevr"/></svg><svg class="ico" style="left:107px;top:5px" width="16" height="16"><use href="#py"/></svg><span class="t" style="left:127px;font-size:13.5px;letter-spacing:0.055px;">main.py</span><span class="t" style="left:1203.4px;font-size:13.5px;letter-spacing:0.197px;">Discovering binary modules...</span><div class="abs" style="left:1395px;top:11.5px;width:146px;height:4px;border-radius:2px;background:linear-gradient(90deg,#3d62b0,#5a88e6 50%,#3d62b0)"></div><span class="t" style="left:1560.4px;font-size:13.5px;letter-spacing:-0.398px;">161:38</span><span class="t" style="left:1616px;font-size:12.5px;letter-spacing:-0.381px;">CRLF</span><span class="t" style="left:1664.6px;font-size:13.5px;letter-spacing:0.163px;">UTF-8</span><span class="t" style="left:1724.4px;font-size:13.5px;letter-spacing:0.081px;">4 spaces</span><span class="t" style="left:1796px;font-size:13.5px;letter-spacing:0.154px;">Python 3.12</span><svg class="ico" style="left:1888px;top:6px" width="15" height="15" viewBox="0 0 15 15"><g fill="none" stroke="#ced0d6" stroke-width="1.3"><rect x="1" y="6.2" width="9.5" height="7.3" rx="1.5"/><path d="M7.6 6V3.8a2.6 2.6 0 015.2 0V5"/><path d="M5.75 9v2" stroke-width="1.5"/></g></svg></div>
<div id="taskbar" class="abs"><svg class="ico" style="left:15.5px;top:23px" width="17" height="16" viewBox="0 0 17 16"><g fill="#fff"><path d="M0 2.3L7 1.3V7.5H0zM8 1.2L17 0v7.5H8zM0 8.5h7v6.2L0 13.7zM8 8.5h9V16l-9-1.2z"/></g></svg><div class="abs" style="left:48px;top:0;width:288px;height:62px;background:#f2f2f2"></div><svg class="ico" style="left:59px;top:22px" width="18" height="18" viewBox="0 0 18 18"><circle cx="11.4" cy="6.6" r="5.3" fill="none" stroke="#1a1a1a" stroke-width="1.4"/><path d="M7.6 10.4L1.2 16.8" stroke="#1a1a1a" stroke-width="1.5"/></svg><span class="t" style="left:88.5px;font-size:15.3px;letter-spacing:-0.281px;top:21.6px;line-height:20px;color:#3b3b3b;">Taper ici pour rechercher</span><svg class="ico" style="left:352px;top:23px" width="16" height="15" viewBox="0 0 16 15"><g fill="none" stroke="#fff" stroke-width="1.3"><rect x=".65" y="3.6" width="10" height="7.8"/><path d="M0 .65h11.3M0 14.35h11.3"/></g><g fill="#fff"><rect x="13.3" y="0" width="1.6" height="3"/><rect x="13.3" y="5" width="1.6" height="5"/><rect x="13.3" y="12" width="1.6" height="3"/></g></svg><div class="abs" style="left:390.5px;top:11px;width:1px;height:40px;background:#3c3e4c"></div><div class="abs" style="left:393px;top:11px;width:1px;height:40px;background:#3c3e4c"></div><div class="abs" style="left:1103.5px;top:11px;width:1px;height:40px;background:#3c3d46"></div><div class="abs" style="left:1106px;top:11px;width:1px;height:40px;background:#3c3d46"></div><svg class="ico" style="left:420px;top:10px" width="22" height="19" viewBox="0 0 22 19"><path d="M0 2.2C0 1.5.5 1 1.2 1h6l1.8 2H21c.6 0 1 .4 1 1v13.5H0z" fill="#e9b53f"/><path d="M0 5h22v13H0z" fill="#f7d469"/><path d="M4 11h14v7H4z" fill="#4f93c4"/><path d="M7 14h8v4H7z" fill="#f7d469"/><path d="M4 11h14v1.6H4z" fill="#3d7fb2"/></svg><svg class="ico" style="left:467.5px;top:8.5px" width="24" height="22" viewBox="0 0 24 22"><rect x="7" y="0" width="17" height="22" rx="1.5" fill="#2f7fd8"/><rect x="7" y="0" width="17" height="5.5" fill="#4ea1ee"/><rect x="7" y="11" width="17" height="5.5" fill="#1f62b8"/><rect x="7" y="16.5" width="17" height="5.5" fill="#174d9c"/><rect x="0" y="5" width="13" height="12" rx="1.2" fill="#1b5cbe"/><text x="6.5" y="14.6" text-anchor="middle" font-family="Liberation Sans,sans-serif" font-weight="bold" font-size="9.5" fill="#fff">W</text></svg><svg class="ico" style="left:516.5px;top:7px" width="25" height="24" viewBox="0 0 25 24"><defs><linearGradient id="eg1" x1="0" y1="0" x2="1" y2="1"><stop offset="0" stop-color="#35c1b1"/><stop offset="1" stop-color="#5ad45a"/></linearGradient><linearGradient id="eg2" x1="0" y1="0" x2="0" y2="1"><stop offset="0" stop-color="#1b9de2"/><stop offset="1" stop-color="#1662c4"/></linearGradient></defs><circle cx="12.5" cy="12" r="12" fill="url(#eg2)"/><path d="M1.5 8C4 2 9 0 13 0c6 0 11 4 11.8 10 .3 3.5-2 5.5-5 5.5-2.5 0-4-1-4-2.5 0-1 .8-1.5.8-3C16.6 8 14.5 6 11.5 6 7 6 3.5 8 1.5 8z" fill="url(#eg1)"/><path d="M9 14c0-3 2-5 4.5-5.5C10 8 6 10.5 6 15c0 4 3 7.5 8 8.5-3-1.5-5-5.5-5-9.5z" fill="#0c4fa0"/></svg><svg class="ico" style="left:566px;top:9.5px" width="24" height="20" viewBox="0 0 24 20"><path d="M9 1l11-1 2 9-11 2z" fill="#e8eaee" stroke="#9aa0aa" stroke-width=".6"/><path d="M11 3l8-.7M11.5 5l8-.7M12 7l8-.7" stroke="#8d939c" stroke-width=".7"/><path d="M1 10l7-4 14 3-5 6z" fill="#c9cdd4"/><path d="M1 10l16 5v4.5L1 14.5z" fill="#a7acb5"/><path d="M17 15l5-6v4.5l-5 6z" fill="#7d838d"/><path d="M3.5 12l11 3.5" stroke="#545963" stroke-width="1.2"/><circle cx="6" cy="8.7" r="1" fill="#4b86c7"/><circle cx="9" cy="9.4" r="1" fill="#4fae5b"/></svg><svg class="ico" style="left:615.5px;top:11px" width="21" height="18" viewBox="0 0 21 18"><rect x="0" y="0" width="21" height="18" rx="1.5" fill="#9db7d3"/><rect x="2" y="1.5" width="17" height="15" fill="#c9d9ea"/><rect x="2" y="1.5" width="3" height="15" fill="#6f8fb3"/><circle cx="11.5" cy="9" r="6.5" fill="#f08a24"/><circle cx="11.5" cy="9" r="5" fill="#f7a944"/><path d="M9.5 5.7v6.6l5.5-3.3z" fill="#fff"/></svg><svg class="ico" style="left:663.5px;top:7.2px" width="25" height="25" viewBox="0 0 25 25"><circle cx="12.5" cy="12.5" r="12.5" fill="#fff"/><path d="M12.5 12.5L1.7 6.25A12.5 12.5 0 0123.3 6.25z" fill="#e34234"/><path d="M12.5 12.5L23.3 6.25A12.5 12.5 0 0112.5 25z" fill="#f7c325"/><path d="M12.5 12.5L12.5 25A12.5 12.5 0 011.7 6.25z" fill="#2fa24e"/><path d="M12.5 0A12.5 12.5 0 0123.3 6.25H12.5z" fill="#e34234"/><circle cx="12.5" cy="12.5" r="5.8" fill="#fff"/><circle cx="12.5" cy="12.5" r="4.6" fill="#3d7ee8"/></svg><svg class="ico" style="left:711.5px;top:7.2px" width="25" height="25" viewBox="0 0 25 25"><circle cx="12.5" cy="12.5" r="12.5" fill="#fff"/><path d="M12.5 12.5L1.7 6.25A12.5 12.5 0 0123.3 6.25z" fill="#e34234"/><path d="M12.5 12.5L23.3 6.25A12.5 12.5 0 0112.5 25z" fill="#f7c325"/><path d="M12.5 12.5L12.5 25A12.5 12.5 0 011.7 6.25z" fill="#2fa24e"/><path d="M12.5 0A12.5 12.5 0 0123.3 6.25H12.5z" fill="#e34234"/><circle cx="12.5" cy="12.5" r="5.8" fill="#fff"/><circle cx="12.5" cy="12.5" r="4.6" fill="#3d7ee8"/><circle cx="19.5" cy="19" r="6.3" fill="#fff"/><circle cx="19.5" cy="19" r="5.2" fill="#2c9d4a"/><path d="M16.5 19.3l6-2.3-2.3 5z" fill="#fff"/></svg><svg class="ico" style="left:761.5px;top:7.2px" width="28" height="25" viewBox="0 0 28 25"><defs><linearGradient id="pg1" x1="0" y1="1" x2="1" y2="0"><stop offset="0" stop-color="#21d2ec"/><stop offset=".6" stop-color="#2fd7a0"/><stop offset="1" stop-color="#e8ee4a"/></linearGradient></defs><path d="M4 2h14l9 -2 1 13-6 12H1z" fill="url(#pg1)"/><path d="M0 9l6 12 6 4H1z" fill="#1b9fd8"/><rect x="6" y="4" width="16" height="16" fill="#000"/><text x="7.5" y="12" font-family="Liberation Sans,sans-serif" font-weight="bold" font-size="7.5" fill="#fff" textLength="11" lengthAdjust="spacingAndGlyphs">PC</text><rect x="8" y="16" width="5.5" height="1.2" fill="#fff"/></svg><div class="abs" style="left:705px;top:38px;width:40px;height:2px;background:#9bb9e8"></div><div class="abs" style="left:754px;top:38px;width:40px;height:2px;background:#9bb9e8"></div><span class="t" style="left:1117.3px;font-size:11.9px;letter-spacing:-0.395px;top:23.3px;line-height:16px;color:#fff;">Bureau</span><svg class="ico" style="left:1182px;top:11px" width="20" height="27" viewBox="0 0 20 27"><path d="M1 1h14l4 3v20l-6 3-2-5H1z" fill="#f7da7c"/><path d="M1 1h9l3 4v22l-12-5z" fill="#f2c552"/><path d="M13 5l6-1v20l-6 3z" fill="#fbe7a2"/></svg><span class="t" style="left:1169.4px;font-size:12px;letter-spacing:-0.255px;top:40.0px;line-height:16px;color:#fff;">OneDrive</span><svg class="ico" style="left:1254.5px;top:11px" width="25" height="27" viewBox="0 0 25 27"><path d="M1 1h12l3 3v18l-5 4-2-4H1z" fill="#f7da7c"/><path d="M1 1h8l2 4v21l-10-4z" fill="#f2c552"/><circle cx="15.5" cy="10" r="4.2" fill="#7a5236"/><path d="M11.5 9c0-3 2-4.5 4-4.5s4 1.5 4 4.5c-1-2-2.5-2.5-4-2.5s-3 .5-4 2.5z" fill="#3a2618"/><path d="M7.5 27c0-7 3-11 8-11s8.5 4 8.5 11z" fill="#3f9a78"/><path d="M13 16l2.5 4 2.5-4z" fill="#e9f2ee"/></svg><span class="t" style="left:1233.3px;font-size:12px;letter-spacing:-0.056px;top:40.0px;line-height:16px;color:#fff;">Rodrigo Al...</span><svg class="ico" style="left:1324px;top:10.5px" width="28" height="25" viewBox="0 0 28 25"><path d="M0 3c0-1 .5-1.5 1.5-1.5h8l2 2.5H27c.6 0 1 .4 1 1v20H0z" fill="#e9b53f"/><path d="M0 6h28v19H0z" fill="#f7d469"/><path d="M5 14h18v11H5z" fill="#4f93c4"/><path d="M5 14h18v2.5H5z" fill="#2f74b0"/><path d="M9.5 19h9v6h-9z" fill="#f7d469"/></svg><span class="t" style="left:1306.3px;font-size:12px;letter-spacing:-0.017px;top:40.0px;line-height:16px;color:#fff;">Bibliothèq...</span><svg class="ico" style="left:1397px;top:8.4px" width="27" height="28" viewBox="0 0 27 28"><circle cx="17" cy="10" r="9.5" fill="#4f9bc4"/><path d="M10 5c3-1 5 1 8 0s4-3 6-2c-2-2-5-3-8-2.5S11 3 10 5zM12 14c2-1 5 0 6 2s3 2 5 0c-1 2-4 4-7 3.5S12 16 12 14z" fill="#8fc7a6"/><path d="M1 9.5l15 3v10l-15-3z" fill="#3d9be9"/><path d="M2.5 11.2l12 2.4v7.2l-12-2.4z" fill="#62b5f5"/><path d="M6 23.5l7 1.5v1.5l-8-1.5z" fill="#c9d3de"/><path d="M8 21l3 .6v3l-3-.6z" fill="#aab6c4"/></svg><span class="t" style="left:1391.3px;font-size:11.2px;letter-spacing:-0.381px;top:40.0px;line-height:16px;color:#fff;">Réseau</span><svg class="ico" style="left:1469.5px;top:6.5px" width="9" height="7" viewBox="0 0 9 7"><path d="M.7.7l3 2.8-3 2.8M4.7.7l3 2.8-3 2.8" fill="none" stroke="#fff" stroke-width="1.2"/></svg><svg class="ico" style="left:1490.5px;top:20.5px" width="23" height="22" viewBox="0 0 23 22"><circle cx="10.5" cy="10.5" r="10" fill="#eef4f8"/><circle cx="10.5" cy="10.5" r="8.2" fill="#2b9fd3"/><text x="10.5" y="15.2" text-anchor="middle" font-family="Liberation Sans,sans-serif" font-weight="bold" font-size="13" fill="#fff">?</text><path d="M18.5 12.5c1.5.8 2.5.8 3.5.8 0 3.5-1 6-3.5 7.5-2.5-1.5-3.5-4-3.5-7.5 1 0 2 0 3.5-.8z" fill="#f2cf52" stroke="#c9a637" stroke-width=".5"/></svg><svg class="ico" style="left:1534.5px;top:18px" width="26" height="26" viewBox="0 0 26 26"><circle cx="6.5" cy="7" r="6.5" fill="#e8693a"/><path d="M6.5 3v5" stroke="#1c1c1c" stroke-width="1.8"/><circle cx="6.5" cy="10.5" r="1.1" fill="#1c1c1c"/><path d="M6 18l2.5-5.5c.3-.7.9-1 1.6-1h8c.7 0 1.3.3 1.6 1L22.2 18c1.5.3 2.3 1 2.3 2.5v3H3.7v-3C3.7 19 4.5 18.3 6 18z" fill="#e8693a"/><path d="M9 17.2l1.5-3.5h7.2l1.5 3.5z" fill="#1c1c1c"/><rect x="5" y="23" width="4" height="2.5" rx=".8" fill="#e8693a"/><rect x="19" y="23" width="4" height="2.5" rx=".8" fill="#e8693a"/><circle cx="7.5" cy="20.7" r="1.1" fill="#1c1c1c"/><circle cx="20.5" cy="20.7" r="1.1" fill="#1c1c1c"/></svg><span class="t" style="left:1567px;font-size:14.4px;letter-spacing:-0.371px;top:21.2px;line-height:20px;color:#fff;">Route fermée dans d...</span><svg class="ico" style="left:1731px;top:27px" width="12" height="8" viewBox="0 0 12 8"><path d="M.7 7L6 1.2 11.3 7" fill="none" stroke="#fff" stroke-width="1.3"/></svg><svg class="ico" style="left:1752.5px;top:25px" width="17" height="13" viewBox="0 0 17 13"><path d="M.7 4.2h2.8L7 .9v11.2L3.5 8.8H.7z" fill="none" stroke="#fff" stroke-width="1.1" stroke-linejoin="round"/><path d="M9 4.5c.9.9.9 3.1 0 4M11 2.8c1.9 1.9 1.9 5.5 0 7.4" fill="none" stroke="#fff" stroke-width="1.1"/><path d="M13.2 1c2.8 2.8 2.8 8.2 0 11" fill="none" stroke="#8a8a8a" stroke-width="1"/></svg><svg class="ico" style="left:1779.5px;top:25.5px" width="13" height="12" viewBox="0 0 13 12"><g fill="none" stroke="#fff" stroke-width="1.2"><path d="M.6 11.4A10.8 10.8 0 0111.4.6"/><path d="M3.8 11.4A7.6 7.6 0 0111.4 3.8"/><path d="M7 11.4A4.4 4.4 0 0111.4 7"/></g><circle cx="10.8" cy="10.8" r="1.3" fill="#fff"/></svg><span class="t" style="left:1818.7px;font-size:11.1px;letter-spacing:-0.369px;top:4.2px;line-height:16px;color:#fff;">15:18</span><span class="t" style="left:1816.4px;font-size:12px;letter-spacing:0.148px;top:23.2px;line-height:16px;color:#fff;">mardi</span><span class="t" style="left:1803px;font-size:12px;letter-spacing:-0.229px;top:41.6px;line-height:16px;color:#fff;">28/01/2025</span><svg class="ico" style="left:1879px;top:23px" width="24" height="24" viewBox="0 0 24 24"><path d="M0 0h16v11.5H5.5L2.5 14.5V11.5H0z" fill="#fff"/><path d="M2.5 3h11M2.5 5.5h11M2.5 8h7" stroke="#1e1e20" stroke-width="1"/><circle cx="16" cy="16.5" r="7" fill="#2a2a2c" stroke="#a9a9a9" stroke-width="1.1"/><text x="16" y="20.5" text-anchor="middle" font-family="Liberation Sans,sans-serif" font-size="11" fill="#fff">1</text></svg><div class="abs" style="left:1915px;top:0;width:1px;height:62px;background:#4c4c4e"></div></div>
<svg class="abs" style="left:28px;top:908px" width="72" height="32" viewBox="0 0 72 32"><path d="M1.8 13.2L21 21.4" stroke="#e23a1a" stroke-width="1.4" fill="none" stroke-linecap="round"/><path d="M15.6 4.7 L19.3 3.4 L33.5 5.9 L50.2 8.8 L64.3 10.4 L66.7 12 L66.3 15.3 L64.3 16.9 L54.3 16.1 L43.3 14.7 L44 18.5 L46.3 20.3 L45.5 22.7 L37.7 24 L36 26.1 L25.2 26.4 L19.5 22.8 L19.5 21.4 L25.2 18.6 L28.7 15.3 L30 10.8 L28.5 9.6 L17.7 7 L15.6 5.5ZM30.7 12.3 L33.3 17 L29.2 17.6ZM24.3 21.4 L28.8 20.1 L31 22.2 L26.2 23.3ZM35.3 12.8 L36.7 12.6 L39.8 18.6 L38.4 19Z" fill="#f2300c" fill-rule="evenodd"/></svg>
</body>
</html>
